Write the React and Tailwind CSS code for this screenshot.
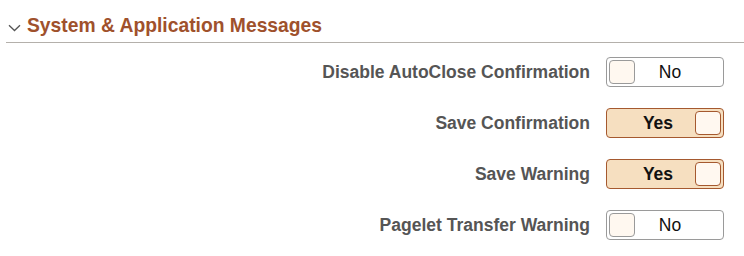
import React, { useState } from "react";

const rows = [
  { label: "Disable AutoClose Confirmation", on: false },
  { label: "Save Confirmation", on: true },
  { label: "Save Warning", on: true },
  { label: "Pagelet Transfer Warning", on: false },
];

const Toggle = ({ on, onClick }) => {
  return (
    <button
      type="button"
      onClick={onClick}
      className={
        on
          ? "relative flex h-[30px] w-[118px] items-center rounded-[4px] border border-[#a5592f] bg-[#f6dfc0]"
          : "relative flex h-[30px] w-[118px] items-center rounded-[4px] border border-[#9a9a9a] bg-white"
      }
    >
      {on ? (
        <>
          <span className="flex-1 pr-[14px] text-center text-[17.5px] font-bold text-[#111]">
            Yes
          </span>
          <span className="absolute right-[2px] top-[2px] h-[24px] w-[26px] rounded-[4px] border border-[#a5592f] bg-[#fff8f0]" />
        </>
      ) : (
        <>
          <span className="absolute left-[2px] top-[2px] h-[24px] w-[26px] rounded-[4px] border border-[#9a9a9a] bg-[#fff8f0]" />
          <span className="flex-1 pl-[10px] text-center text-[17.5px] text-[#111]">
            No
          </span>
        </>
      )}
    </button>
  );
};

const App = () => {
  const [data, setData] = useState(rows);

  const flip = (index) => {
    setData(data.map((r, i) => (i === index ? { ...r, on: !r.on } : r)));
  };

  return (
    <div
      className="h-[256px] w-[744px] bg-white"
      style={{ fontFamily: '"Liberation Sans", Arial, sans-serif' }}
    >
      <div className="ml-[6px] flex items-center border-b border-[#b4b0ab] pt-[14px] pb-[4px]">
        <svg
          width="13"
          height="8"
          viewBox="0 0 13 8"
          className="ml-[2px] mr-[6px] mt-[3px]"
        >
          <path
            d="M1 1.2 L6.5 6.5 L12 1.2"
            fill="none"
            stroke="#555"
            strokeWidth="1.3"
          />
        </svg>
        <h2 className="text-[19.3px] font-bold leading-[24px] text-[#9f512c]">
          System &amp; Application Messages
        </h2>
      </div>
      <div className="flex flex-col gap-[21px] pt-[14px] pr-[20px]">
        {data.map((value, index) => {
          return (
            <div
              key={`row_${index}`}
              className="flex items-center justify-end gap-[16px]"
            >
              <div className="text-[17.5px] font-bold text-[#555]">
                {value.label}
              </div>
              <Toggle on={value.on} onClick={() => flip(index)} />
            </div>
          );
        })}
      </div>
    </div>
  );
};

export default App;
